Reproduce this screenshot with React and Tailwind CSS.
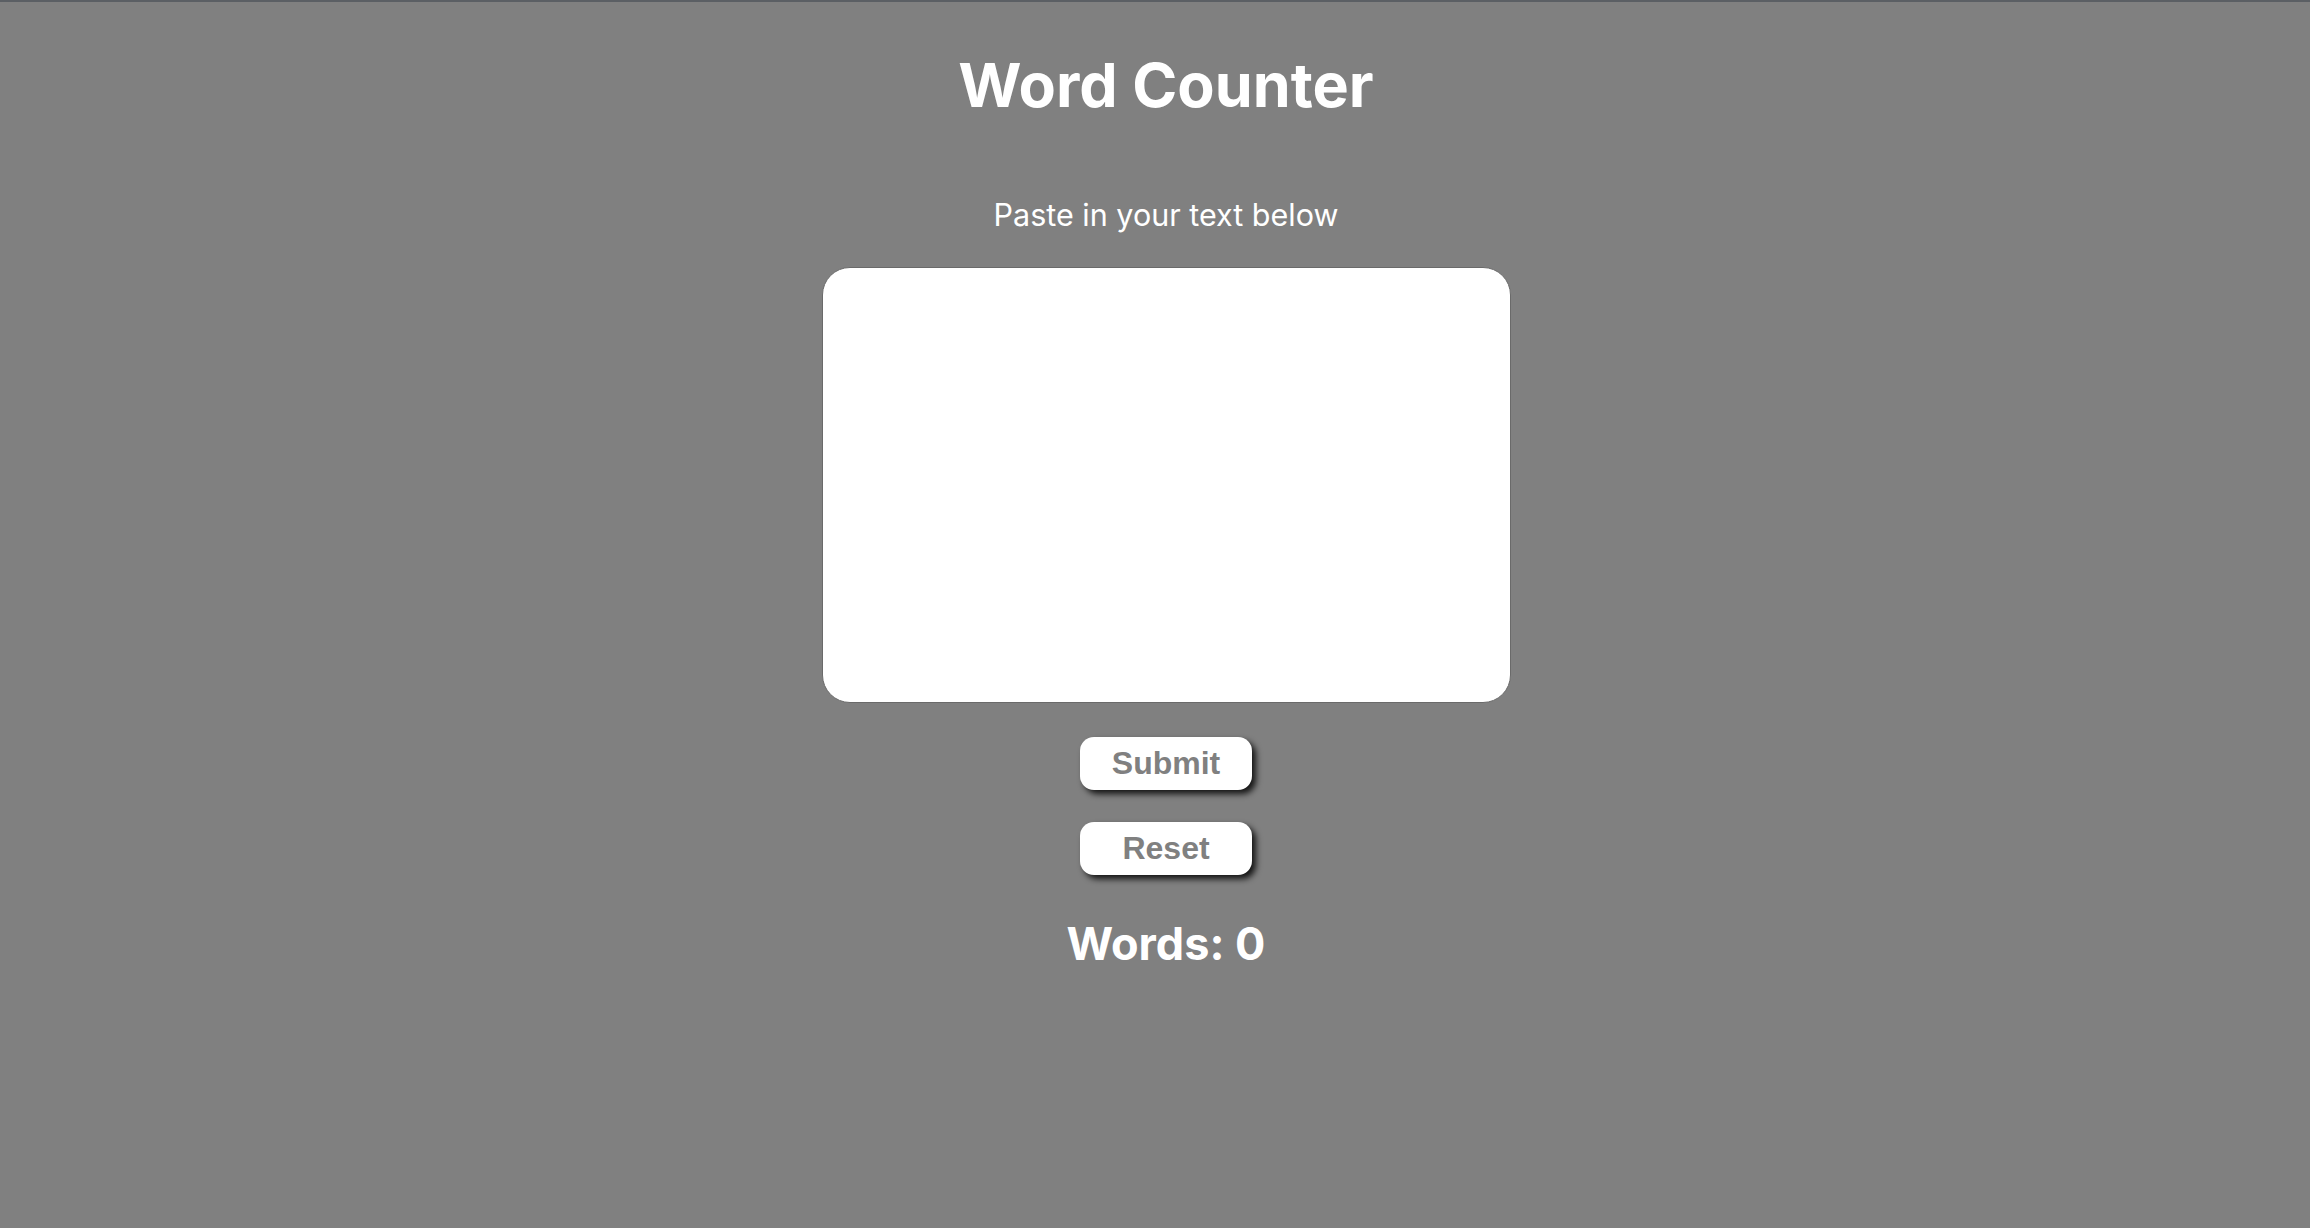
import { useState } from "react";

const App = () => {
  const [text, setText] = useState("");
  const [count, setCount] = useState(0);

  // count words in the textarea
  const handleSubmit = () => {
    const words = text.trim().split(/\s+/).filter(Boolean);
    setCount(words.length);
  };

  const handleReset = () => {
    setText("");
    setCount(0);
  };

  return (
    <div className="min-h-screen bg-[#808080] border-t-2 border-[#5b5f64] pl-[22px] flex flex-col items-center font-['Inter',sans-serif] text-white">
      <h1 className="mt-[53px] text-[61px] leading-none font-bold">Word Counter</h1>
      <p className="mt-[84px] text-[30.5px] leading-none">Paste in your text below</p>
      <textarea
        value={text}
        onChange={(e) => setText(e.target.value)}
        className="mt-[36px] w-[689px] h-[436px] bg-white border border-[#6a6a6a] rounded-[28px] resize-none p-4 text-black text-2xl outline-none"
      />
      <button
        onClick={handleSubmit}
        className="mt-[34px] w-[172px] h-[53px] bg-white rounded-[14px] shadow-[4px_4px_6px_rgba(0,0,0,0.85)] text-[#808080] font-bold text-[32px] leading-none font-['Liberation_Sans',Arial,sans-serif]"
      >
        Submit
      </button>
      <button
        onClick={handleReset}
        className="mt-[32px] w-[172px] h-[53px] bg-white rounded-[14px] shadow-[4px_4px_6px_rgba(0,0,0,0.85)] text-[#808080] font-bold text-[32px] leading-none font-['Liberation_Sans',Arial,sans-serif]"
      >
        Reset
      </button>
      <h2 className="mt-[46px] text-[45px] leading-none font-bold">Words: {count}</h2>
    </div>
  );
};

export default App;
